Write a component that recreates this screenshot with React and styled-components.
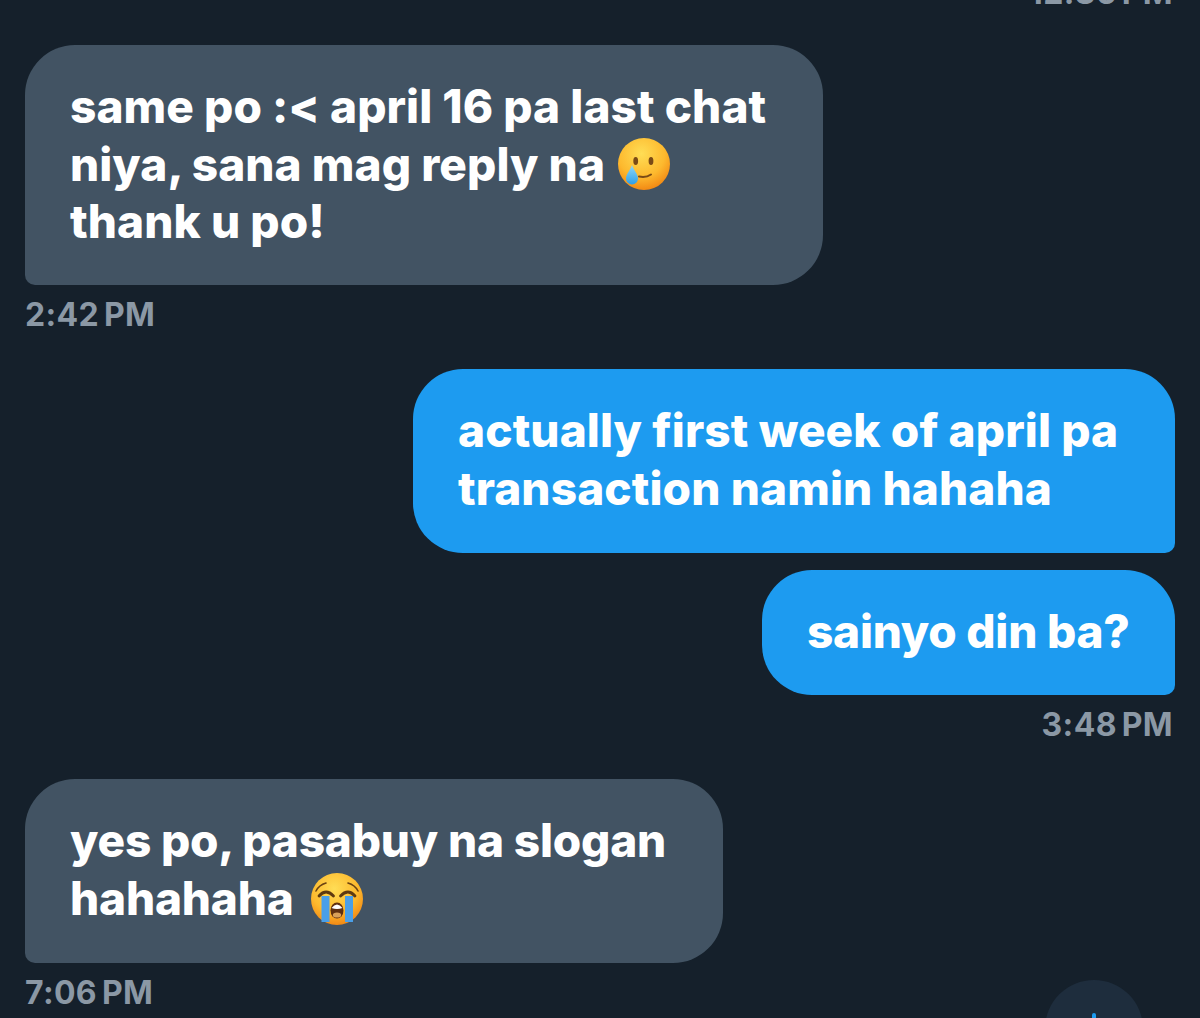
import React from "react";
import styled, { createGlobalStyle } from "styled-components";

const GlobalStyle = createGlobalStyle`
  html, body {
    margin: 0;
    padding: 0;
    background: #15202b;
  }
`;

const Screen = styled.div`
  position: relative;
  width: 1200px;
  height: 1018px;
  overflow: hidden;
  background: #15202b;
  font-family: "Inter", "Liberation Sans", sans-serif;
`;

const Thread = styled.div`
  display: flex;
  flex-direction: column;
  padding: 0 25px;
  margin-top: -28px;
`;

const Group = styled.div`
  display: flex;
  flex-direction: column;
  align-items: ${(p) => (p.$sent ? "flex-end" : "flex-start")};
  gap: 17px;
  margin-top: ${(p) => p.$top || 34}px;
`;

const Bubble = styled.div`
  box-sizing: border-box;
  width: ${(p) => p.$width}px;
  padding: 33px 45px ${(p) => p.$bottom || 34.5}px;
  font-size: 46px;
  font-weight: 800;
  letter-spacing: ${(p) => p.$track ?? 0.05}px;
  line-height: 57.5px;
  color: #ffffff;
  background: ${(p) => (p.$sent ? "#1d9bf0" : "#425363")};
  border-radius: ${(p) => (p.$sent ? "50px 50px 10px 50px" : "50px 50px 50px 10px")};
  white-space: pre-line;
`;

const Time = styled.div`
  box-sizing: border-box;
  font-size: 32px;
  font-weight: 700;
  letter-spacing: 0.35px;
  word-spacing: -3px;
  line-height: 40px;
  color: #8b98a5;
  text-align: ${(p) => (p.$sent ? "right" : "left")};
  width: 100%;
  padding-right: ${(p) => (p.$sent ? 2 : 0)}px;
  margin-top: ${(p) => p.$top ?? 10}px;
`;

const EmojiSvg = styled.svg`
  display: inline-block;
  width: 56px;
  height: 56px;
  vertical-align: -2px;
  margin: -10px 0 -10px ${(p) => p.$left || 0}px;
`;

const ScrollButton = styled.div`
  position: absolute;
  left: 1045px;
  top: 980px;
  width: 98px;
  height: 98px;
  border-radius: 50%;
  background: #1e2d3d;
  display: flex;
  justify-content: center;
`;

const ScrollTick = styled.div`
  width: 4px;
  height: 30px;
  margin-top: 33px;
  background: #1d9bf0;
  border-radius: 2px;
`;

const FaceGradient = ({ id }) => (
  <radialGradient id={id} cx="45%" cy="30%" r="75%">
    <stop offset="0%" stopColor="#ffdd55" />
    <stop offset="60%" stopColor="#fdb92e" />
    <stop offset="100%" stopColor="#f0800f" />
  </radialGradient>
);

const SmileTearEmoji = () => (
  <EmojiSvg viewBox="0 0 56 56" $left={0}>
    <defs>
      <FaceGradient id="faceA" />
      <linearGradient id="tearA" x1="0" y1="0" x2="0" y2="1">
        <stop offset="0%" stopColor="#8fd8f7" />
        <stop offset="100%" stopColor="#2f9fe6" />
      </linearGradient>
    </defs>
    <circle cx="29" cy="27" r="26" fill="url(#faceA)" />
    <ellipse cx="20.7" cy="24" rx="2.4" ry="4" fill="#7a4a16" />
    <ellipse cx="36" cy="24" rx="2.4" ry="4" fill="#7a4a16" />
    <path d="M24 39.5 Q31 41 36 37.5" fill="none" stroke="#7a4a16" strokeWidth="2" strokeLinecap="round" />
    <path d="M17 28 C15.5 33 11 37 11 41.5 A6 6 0 0 0 23 41.5 C23 37 18.5 33 17 28 Z" fill="url(#tearA)" />
  </EmojiSvg>
);

const LoudCryEmoji = () => (
  <EmojiSvg viewBox="0 0 56 56" $left={6}>
    <defs>
      <FaceGradient id="faceB" />
    </defs>
    <circle cx="28" cy="28" r="26" fill="url(#faceB)" />
    <path d="M7 20 Q10 14 17 12" fill="none" stroke="#6b4212" strokeWidth="1.6" strokeLinecap="round" />
    <path d="M49 20 Q46 14 39 12" fill="none" stroke="#6b4212" strokeWidth="1.6" strokeLinecap="round" />
    <path d="M10 25 Q17 17 24.5 25" fill="none" stroke="#5f3a10" strokeWidth="2.8" strokeLinecap="round" />
    <path d="M31.5 25 Q39 17 46 25" fill="none" stroke="#5f3a10" strokeWidth="2.8" strokeLinecap="round" />
    <path d="M12.5 25 H20.5 V51 H12.5 Z" fill="#4a9fe8" />
    <path d="M36 25 H44 V51 H36 Z" fill="#4a9fe8" />
    <ellipse cx="28" cy="39.5" rx="6.5" ry="8" fill="#5f2f10" />
    <path d="M22.5 37 Q28 30 33.5 37 Q28 39 22.5 37 Z" fill="#ffffff" />
    <ellipse cx="28" cy="44" rx="4.2" ry="2.6" fill="#d9a05a" />
  </EmojiSvg>
);

export default function App() {
  return (
    <Screen>
      <GlobalStyle />
      <Thread>
        <Time $sent $top={1}>12:36 PM</Time>
        <Group $top={32}>
          <Bubble $width={798}>
            same po :&lt; april 16 pa last chat{"\n"}niya, sana mag reply na <SmileTearEmoji />{"\n"}thank u po!
          </Bubble>
        </Group>
        <Time>2:42 PM</Time>
        <Group $sent>
          <Bubble $sent $width={762} $bottom={36} $track={0.1}>
            actually first week of april pa{"\n"}transaction namin hahaha
          </Bubble>
          <Bubble $sent $width={413} $track={-0.25}>sainyo din ba?</Bubble>
        </Group>
        <Time $sent>3:48 PM</Time>
        <Group>
          <Bubble $width={698} $bottom={36} $track={-0.2}>
            yes po, pasabuy na slogan{"\n"}hahahaha <LoudCryEmoji />
          </Bubble>
        </Group>
        <Time>7:06 PM</Time>
      </Thread>
      <ScrollButton>
        <ScrollTick />
      </ScrollButton>
    </Screen>
  );
}
